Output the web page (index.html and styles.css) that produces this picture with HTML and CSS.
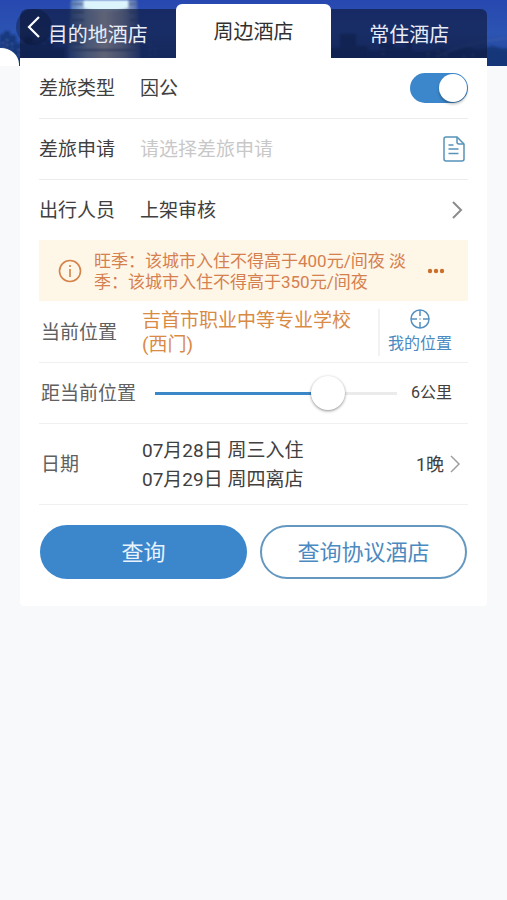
FILE: index.html
```html
<!DOCTYPE html>
<html lang="zh-CN">
<head>
<meta charset="utf-8">
<meta name="viewport" content="width=device-width, initial-scale=1">
<title>周边酒店</title>
<link rel="stylesheet" href="styles.css">
</head>
<body>
<div class="banner" aria-hidden="true">
  <svg class="banner-art" viewBox="0 0 507 66" preserveAspectRatio="none">
    <defs>
      <linearGradient id="sky" x1="0" y1="0" x2="0" y2="1">
        <stop offset="0" stop-color="#2748b0"/>
        <stop offset=".5" stop-color="#2c54b2"/>
        <stop offset="1" stop-color="#1f4190"/>
      </linearGradient>
      <linearGradient id="tower" x1="0" y1="0" x2="1" y2="0">
        <stop offset="0" stop-color="#3f6bb8"/>
        <stop offset=".25" stop-color="#a9c0dc"/>
        <stop offset=".5" stop-color="#f0e8e0"/>
        <stop offset=".75" stop-color="#a9b4cc"/>
        <stop offset="1" stop-color="#3659ab"/>
      </linearGradient>
      <filter id="soft"><feGaussianBlur stdDeviation="0.8"/></filter>
    </defs>
    <rect width="507" height="66" fill="url(#sky)"/>
    <g filter="url(#soft)">
      <path d="M0 34h4v-3h6v4h6v8h8v-6h9v7h12v-4h8v8h12v18H0zM330 48h10V34h16v12h12v5h12v-8h14v5h12v-6h6v9h18l12-3 10 3 14-4 12 3 14-4 12 3 15-2v22H330z" fill="#14306f" opacity=".75"/>
      <path d="M71 0h66l4 66H68z" fill="url(#tower)"/>
      <path d="M84 0h44v8q-22 6-44 0z" fill="#dcf5fc"/>
      <path d="M70 4h13m46 0h8M70 12h14m45 0h8M69 20h15m46 0h8M69 28h15m46 0h8M69 36h15m46 0h8M68 44h16m46 0h9M68 50h72" stroke="#50699a" stroke-width="2" fill="none"/>
      <path d="M3 42v10m4-13v12m5-8v6m7 0v7m131-12v14m5-10v12m228-12v9m45-4v11m10-14v12m8-8v8m18-6v7m9-9v10m9-5v7" stroke="#5478bd" stroke-dasharray="2 3"/>
      <path d="M440 55q24-12 67-17" stroke="#4161ab" fill="none"/>
    </g>
  </svg>
  <span class="banner-corner"></span>
</div>
<main class="page">
  <nav class="tabs" aria-label="酒店类型">
    <a class="tab tab-first" href="#destination">目的地酒店</a>
    <a class="tab tab-active" href="#nearby" aria-current="page">周边酒店</a>
    <a class="tab tab-last" href="#resident">常住酒店</a>
    <button class="back" type="button" aria-label="返回">
      <svg width="14" height="22" viewBox="0 0 14 22"><path d="M12 1 2 11l10 10" fill="none" stroke="#fff" stroke-width="2.200"/></svg>
    </button>
  </nav>
  <form class="card">
    <div class="row">
      <label class="label" for="type">差旅类型</label>
      <span class="value">因公</span>
      <input class="switch" id="type" type="checkbox" checked>
    </div>
    <div class="row">
      <label class="label" for="apply">差旅申请</label>
      <input class="value text" id="apply" type="text" placeholder="请选择差旅申请">
      <svg class="doc" width="22" height="26" viewBox="0 0 22 26" fill="none" stroke="#5792b9" stroke-width="1.500">
        <path d="M3 1h11l7 7v15q0 2-2 2H3q-2 0-2-2V3q0-2 2-2z"/>
        <path d="M14 1v5q0 2 2 2h5M5.500 9h5M5.500 13h10M5.500 17.500h10"/>
      </svg>
    </div>
    <div class="row row-plain">
      <span class="label">出行人员</span>
      <span class="value">上架审核</span>
      <svg class="arrow" width="12" height="18" viewBox="0 0 12 18"><path d="m2 1 8 8-8 8" fill="none" stroke="#8b8b8b" stroke-width="2"/></svg>
    </div>
    <div class="notice">
      <svg width="24" height="24" viewBox="0 0 24 24" fill="none" stroke="#d4834a" stroke-width="1.600">
        <circle cx="12" cy="12" r="10.500"/><path d="M12 10v8M12 6v2"/>
      </svg>
      <p class="notice-text">旺季：该城市入住不得高于400元/间夜 淡季：该城市入住不得高于350元/间夜</p>
      <button class="more" type="button" aria-label="更多">
        <svg width="18" height="6" viewBox="0 0 18 6" fill="#cb702c"><circle cx="3" cy="3" r="2.200"/><circle cx="9" cy="3" r="2.200"/><circle cx="15" cy="3" r="2.200"/></svg>
      </button>
    </div>
    <div class="row row-soft row-place">
      <span class="label">当前位置</span>
      <span class="value place">吉首市职业中等专业学校(西门)</span>
      <button class="locate" type="button">
        <svg width="20" height="20" viewBox="0 0 20 20" fill="none" stroke="#5590c0" stroke-width="1.500">
          <circle cx="10" cy="10" r="9"/><path d="M10 1v6M10 13v6M1 10h6M13 10h6M9.500 10h1"/>
        </svg>
        <span>我的位置</span>
      </button>
    </div>
    <div class="row row-soft">
      <label class="label label-long" for="distance">距当前位置</label>
      <input class="slider" id="distance" type="range" min="0" max="8" value="6">
      <output class="distance" for="distance">6公里</output>
    </div>
    <div class="row row-soft row-dates">
      <span class="label">日期</span>
      <span class="value dates">07月28日 周三入住<br>07月29日 周四离店</span>
      <span class="nights">1晚</span>
      <svg class="arrow arrow-dates" width="12" height="18" viewBox="0 0 12 18"><path d="m2 1 8 8-8 8" fill="none" stroke="#a0a0a0" stroke-width="1.500"/></svg>
    </div>
    <div class="actions">
      <button class="button button-fill" type="submit">查询</button>
      <button class="button" type="button">查询协议酒店</button>
    </div>
  </form>
</main>
</body>
</html>
```
FILE: styles.css
```css
* {
  box-sizing: border-box;
}

body {
  margin: 0;
  position: relative;
  background: #f7f9fb;
  color: #404040;
  font-family: Roboto, "Noto Sans CJK SC", sans-serif;
  font-size: 19px;
  line-height: 24px;
}

button,
input {
  margin: 0;
  padding: 0;
  border: 0;
  background: none;
  color: inherit;
  font: inherit;
}

svg {
  display: block;
  flex: none;
}

.banner {
  position: absolute;
  top: 0;
  left: 0;
  right: 0;
  height: 66px;
}

.banner-art {
  width: 100%;
  height: 100%;
}

.banner-corner {
  position: absolute;
  left: 0;
  bottom: 0;
  width: 19px;
  height: 18px;
  background: #fff;
  border-top-right-radius: 18px 16px;
}

.page {
  position: relative;
  padding: 4px 20px 0;
}

.tabs {
  position: relative;
  display: grid;
  grid-template-columns: 1fr 1fr 1fr;
  align-items: end;
}

.tab {
  display: flex;
  align-items: center;
  justify-content: center;
  height: 49px;
  padding-top: 2px;
  background: rgba(14, 24, 58, 0.64);
  color: #e8edf8;
  font-size: 20px;
  text-decoration: none;
}

.tab-first {
  border-top-left-radius: 8px;
}

.tab-last {
  border-top-right-radius: 6px;
}

.tab-active {
  height: 54px;
  border-radius: 6px 6px 0 0;
  background: #fff;
  color: #303030;
}

.back {
  position: absolute;
  top: 5px;
  left: -4px;
  display: flex;
  align-items: center;
  justify-content: center;
  width: 36px;
  height: 36px;
  border-radius: 50%;
  background: rgba(10, 20, 50, 0.4);
}

.card {
  padding: 0 19px 27px;
  border-radius: 0 0 4px 4px;
  background: #fff;
}

.row {
  display: flex;
  align-items: center;
  min-height: 61px;
  border-bottom: 1px solid #ececec;
}

.row-plain {
  min-height: 60px;
  border-bottom-width: 0;
}

.row-soft {
  padding-left: 2px;
  border-bottom-color: #f0f0f0;
}

.row-place {
  min-height: 62px;
  padding-top: 1px;
}

.label,
.value {
  padding-top: 2px;
}

.label {
  flex: none;
  width: 101px;
}

.row-soft .label {
  color: #606060;
}

.label-long.label {
  width: 114px;
}

.value {
  flex: 1;
  min-width: 0;
}

.text {
  outline: 0;
}

.text::placeholder {
  color: #c8c8c8;
  opacity: 1;
}

.doc {
  margin-right: 3px;
}

.arrow {
  margin-right: 5px;
}

.arrow-dates {
  margin-right: 7px;
}

.switch {
  display: flex;
  align-items: center;
  width: 58px;
  height: 30px;
  padding: 1px;
  border-radius: 15px;
  background: #ccc;
  appearance: none;
}

.switch::before {
  content: "";
  width: 28px;
  height: 28px;
  border-radius: 50%;
  background: #fff;
  box-shadow: 0 2px 3px rgba(0, 0, 0, 0.3);
}

.switch:checked {
  justify-content: flex-end;
  background: #3c87cc;
}

.notice {
  display: flex;
  align-items: center;
  min-height: 61px;
  padding: 0 23px 0 19px;
  background: #fef6e7;
  color: #d5804f;
}

.notice-text {
  flex: 1;
  margin: 0 12px;
  padding-top: 2px;
  font-size: 17px;
  line-height: 21px;
}

.place {
  padding-right: 16px;
  color: #d98a45;
}

.locate {
  display: flex;
  flex-direction: column;
  align-items: center;
  gap: 3px;
  padding: 0 16px 0 8px;
  border-left: 2px solid #f2f2f5;
  color: #4b8ac0;
  font-size: 16px;
}

.slider {
  flex: 1;
  min-width: 0;
  height: 36px;
  appearance: none;
}

.slider::-webkit-slider-runnable-track {
  height: 3px;
  background: linear-gradient(90deg, #3c87c8 70%, #ebebeb 70%);
}

.slider::-webkit-slider-thumb {
  width: 34px;
  height: 34px;
  margin-top: -16px;
  border-radius: 50%;
  background: #fff;
  box-shadow: 0 1px 3px rgba(0, 0, 0, 0.45);
  appearance: none;
}

.distance {
  margin: 0 16px 0 14px;
  font-size: 16px;
}

.row-dates {
  min-height: 81px;
}

.dates {
  line-height: 29px;
}

.nights {
  margin-right: 5px;
  padding-top: 2px;
  font-size: 18px;
}

.actions {
  display: grid;
  grid-template-columns: 1fr 1fr;
  gap: 13px;
  padding: 20px 1px 0;
}

.button {
  height: 54px;
  padding-top: 2px;
  border: 2px solid #6498c0;
  border-radius: 27px;
  color: #4b8ac0;
  font-size: 22px;
}

.button-fill {
  border-color: #3c87cc;
  background: #3c87cc;
  color: #e8f3fc;
}
```
